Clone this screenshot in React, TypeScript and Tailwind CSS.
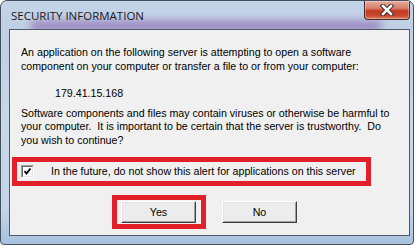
import React from "react";

const ui = { fontFamily: '"Liberation Sans", Arial, sans-serif' };
const titleFont = { fontFamily: '"Open Sans", "Noto Sans", sans-serif' };

function CloseButton() {
  return (
    <div className="w-[46px] h-[19px] rounded-b-[4px] border border-t-0 border-[#4a2a26] bg-[linear-gradient(180deg,#e7aa9d_0%,#d8806c_40%,#c2391f_55%,#c8472c_80%,#dc7a5a_100%)] flex items-center justify-center shadow-[inset_0_0_0_1px_rgba(255,255,255,0.35)]">
      <svg width="16" height="12" viewBox="0 0 16 12">
        <path d="M4 2 L12 10 M12 2 L4 10" stroke="#3b2a28" strokeWidth="4.5" strokeLinecap="square" />
        <path d="M4 2 L12 10 M12 2 L4 10" stroke="#ffffff" strokeWidth="2.5" strokeLinecap="square" />
      </svg>
    </div>
  );
}

function Checkbox() {
  return (
    <div className="w-[13px] h-[13px] border border-t-[#a0a0a0] border-l-[#a0a0a0] border-r-white border-b-white">
      <div className="w-full h-full bg-white border border-t-[#696969] border-l-[#696969] border-r-[#e3e3e3] border-b-[#e3e3e3] flex items-center justify-center">
        <svg width="9" height="9" viewBox="0 0 9 9">
          <path d="M1.5 4 L3.5 6.5 L7.5 1.5" stroke="#000" strokeWidth="1.8" fill="none" />
        </svg>
      </div>
    </div>
  );
}

function WinButton({ label }: { label: string }) {
  return (
    <button
      className="w-[75px] h-[22px] bg-[#ececec] border border-t-white border-l-white border-r-[#404040] border-b-[#404040] text-[10.7px] text-black leading-none"
      style={ui}
    >
      <div className="w-full h-full border border-t-[#e3e3e3] border-l-[#e3e3e3] border-r-[#a0a0a0] border-b-[#a0a0a0] flex items-center justify-center">
        {label}
      </div>
    </button>
  );
}

export default function App() {
  return (
    <div className="w-[418px] h-[246px] bg-white">
      <div className="relative w-[414px] h-[245px] rounded-t-[7px] rounded-b-[4px] border border-[#45505e] bg-[linear-gradient(180deg,#c4d4e8_0%,#bfcfe4_12%,#c8d7e9_50%,#c4d5e9_85%,#a7c1df_100%)] flex flex-col pl-[8px] pr-[3px] pb-[8px] overflow-hidden">
        {/* blurred background showing through the glass */}
        <div className="absolute left-[30px] top-[20px] w-[350px] h-[10px] bg-[#8a62ad] opacity-70 blur-[4px]" />

        <div className="relative h-[28px] flex items-start justify-between">
          <div className="pt-[8px] pl-[2px] text-[11.5px] leading-[14px] text-[#1a1a1a]" style={titleFont}>
            SECURITY INFORMATION
          </div>
          <CloseButton />
        </div>

        <div className="relative flex-1 border border-[#4d5a6a] bg-[#f0f0f0] text-[10.65px] leading-[13.5px] text-black pt-[16px]" style={ui}>
          <p className="ml-[11px]">
            An application on the following server is attempting to open a software
            <br />
            component on your computer or transfer a file to or from your computer:
          </p>
          <p className="ml-[45px] mt-[14px]">179.41.15.168</p>
          <p className="ml-[11px] mt-[6px]">
            Software components and files may contain viruses or otherwise be harmful to
            <br />
            your computer.&nbsp; It is important to be certain that the server is trustworthy.&nbsp; Do
            <br />
            you wish to continue?
          </p>

          <div className="ml-[2px] mt-[10px] w-[359px] h-[29px] border-[5px] border-[#e2202a] flex items-center pl-[4px]">
            <Checkbox />
            <span className="ml-[17px]">In the future, do not show this alert for applications on this server</span>
          </div>

          <div className="mt-[9px] ml-[102px] flex items-center">
            <div className="w-[94px] h-[34px] border-[5px] border-[#e2202a] flex items-center pl-[4px]">
              <WinButton label="Yes" />
            </div>
            <div className="ml-[16px]">
              <WinButton label="No" />
            </div>
          </div>
        </div>
      </div>
    </div>
  );
}
